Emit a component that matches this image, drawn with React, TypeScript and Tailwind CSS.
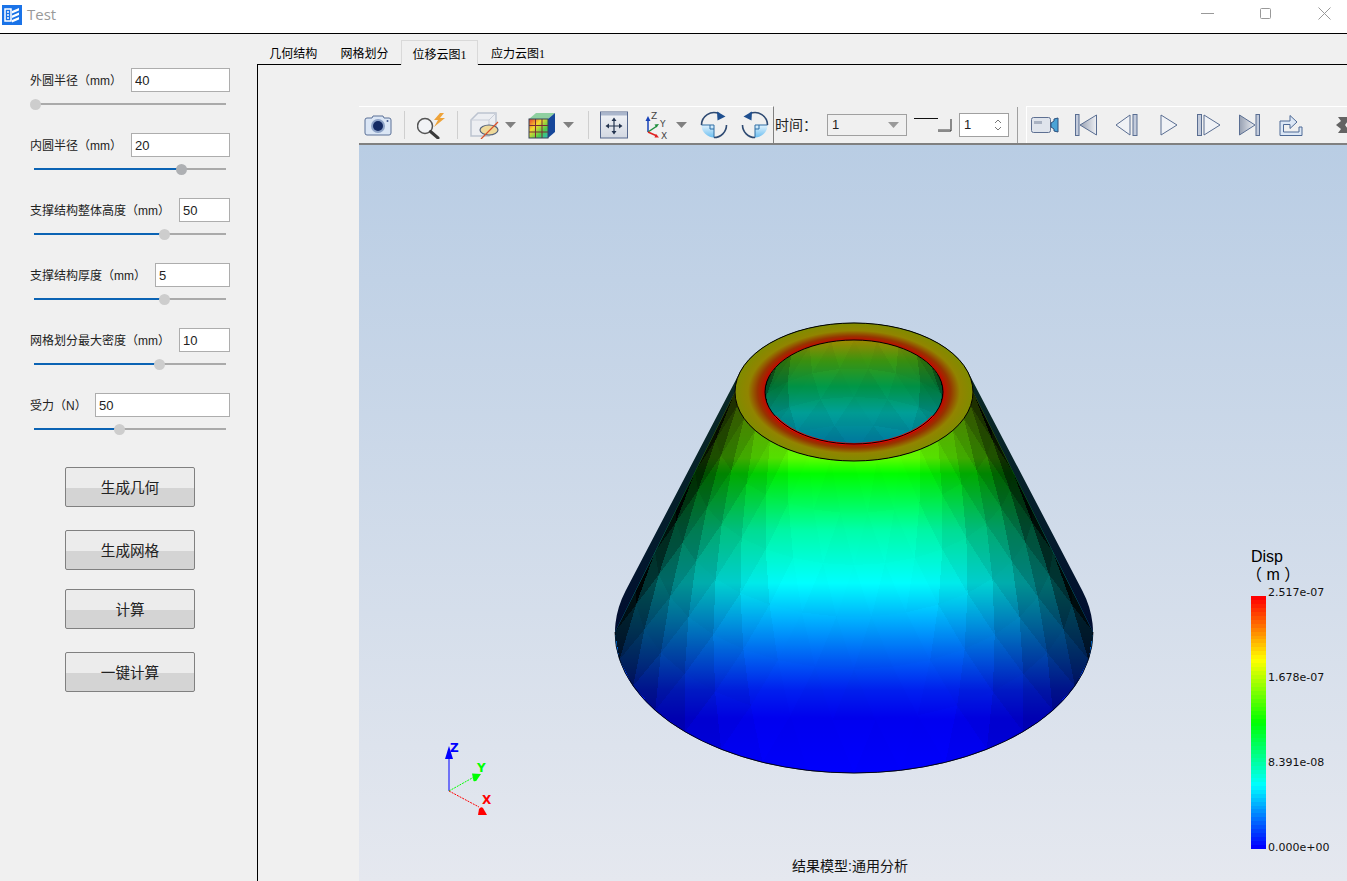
import React from 'react';

const cjk = { sans: "font-['Liberation_Sans','Noto_Sans_CJK_SC',sans-serif]" };

// left panel data
const params = [
  { label: '外圆半径（mm）', value: '40', inputW: 'w-[99px]', knob: 35, dark: false, fill: false },
  { label: '内圆半径（mm）', value: '20', inputW: 'w-[99px]', knob: 181, dark: true, fill: true },
  { label: '支撑结构整体高度（mm）', value: '50', inputW: 'w-[51px]', knob: 164, dark: false, fill: true },
  { label: '支撑结构厚度（mm）', value: '5', inputW: 'w-[75px]', knob: 164, dark: false, fill: true },
  { label: '网格划分最大密度（mm）', value: '10', inputW: 'w-[51px]', knob: 159, dark: false, fill: true },
  { label: '受力（N）', value: '50', inputW: 'w-[135px]', knob: 119, dark: false, fill: true },
];

const actions = [
  { label: '生成几何', mt: 'mt-0' },
  { label: '生成网格', mt: 'mt-[23px]' },
  { label: '计算', mt: 'mt-[19px]' },
  { label: '一键计算', mt: 'mt-[23px]' },
];

const ParamRow: React.FC<(typeof params)[number]> = ({ label, value, inputW, knob, dark, fill }) => {
  const left = knob - 34;
  return (
    <div className="h-[65px]">
      <div className="flex items-center justify-between h-6 pl-[30px] pr-[27px]">
        <span className="mt-[2px] text-xs text-[#222]">{label}</span>
        <input
          readOnly
          value={value}
          className={`${inputW} h-6 border border-[#adadad] bg-white px-[3px] text-[13px] text-[#222] outline-none`}
        />
      </div>
      <div className="relative ml-[34px] mt-[11px] w-[192px] h-[2px] bg-[#aaaaaa]">
        {fill && <div className="h-full bg-[#0b63b4]" style={{ width: left }} />}
        <div
          className={`absolute top-[-4.5px] w-[11px] h-[11px] rounded-full -ml-[5.5px] ${dark ? 'bg-[#aeb0b3]' : 'bg-[#cdcdcd]'}`}
          style={{ left }}
        />
      </div>
    </div>
  );
};

const TitleBar = () => (
  <div className="h-[34px] shrink-0 bg-white border-b border-black flex items-center">
    <svg width="20" height="20" viewBox="0 0 20 20" className="ml-[2px] -mt-[4px]">
      <rect width="20" height="20" fill="#1a73e8" />
      <path d="M3 4h6v12H3zM5 7h2M5 10h2M5 13h2" fill="none" stroke="#fff" strokeWidth="1.5" />
      <path d="M10 6l7-3v2.5l-7 3zM10 10.5l7-3V10l-7 3zM10 15l7-3v2.500l-7 3z" fill="#fff" />
    </svg>
    <span className="ml-[5px] -mt-[5px] text-[15px] text-[#999] font-['Open_Sans',sans-serif]">Test</span>
    <div className="ml-auto flex items-center -mt-[7px]">
      <svg width="13" height="13" viewBox="0 0 13 13" className="mr-[45px]">
        <path d="M0 6.500h13" stroke="#999" />
      </svg>
      <svg width="13" height="13" viewBox="0 0 13 13" className="mr-[46px]">
        <rect x="1.500" y="1.500" width="10" height="10" rx="1" fill="none" stroke="#999" />
      </svg>
      <svg width="13" height="13" viewBox="0 0 13 13" className="mr-[16px]">
        <path d="M.5.5l12 12M12.500.5l-12 12" stroke="#999" />
      </svg>
    </div>
  </div>
);

const SidePanel = () => (
  <div className="w-[257px] shrink-0 pt-[34px]">
    {params.map(p => (
      <ParamRow key={p.label} {...p} />
    ))}
    <div className="mt-[9px] ml-[65px] flex flex-col">
      {actions.map(a => (
        <button
          key={a.label}
          className={`${a.mt} w-[130px] h-10 pt-1 rounded-[2px] border border-[#808080] bg-[linear-gradient(#ececec_52%,#d4d4d4_52%)] text-[14.600px] text-[#222]`}
        >
          {a.label}
        </button>
      ))}
    </div>
  </div>
);

const Tabs = () => (
  <div className="h-[30px] shrink-0 flex items-end text-xs text-black font-['Liberation_Serif','Noto_Sans_CJK_SC',serif]">
    <div className="w-[71.500px] ml-[0.500px] h-6 pt-[3px] flex items-center justify-center">几何结构</div>
    <div className="w-[71px] h-6 pt-[3px] flex items-center justify-center">网格划分</div>
    <div className="relative -mb-px ml-px w-[77px] h-[25px] pt-[3px] border border-b-0 border-[#d9d9d9] bg-[#f0f0f0] flex items-center justify-center">
      位移云图1
    </div>
    <div className="ml-px w-[78px] h-6 pt-[3px] flex items-center justify-center">应力云图1</div>
  </div>
);

// toolbar icons
const Sep = ({ ml }: { ml: string }) => <div className={`${ml} w-px h-[28px] bg-[#cfcfcf] shrink-0`} />;

const Caret = ({ ml }: { ml: string }) => (
  <svg width="11" height="6" viewBox="0 0 11 6" className={`${ml} shrink-0`}>
    <path d="M0 0h11L5.500 6z" fill="#808080" />
  </svg>
);

const CameraIcon = () => (
  <svg width="28" height="24" viewBox="0 0 28 24" className="ml-[5px] shrink-0">
    <path d="M1 7a2 2 0 012-2h5l1-2h10l1 2h5a2 2 0 012 2v13a2 2 0 01-2 2H3a2 2 0 01-2-2z" fill="#dbe6f5" stroke="#5b7097" />
    <circle cx="14" cy="13" r="7" fill="#8ea3c7" />
    <circle cx="14" cy="13" r="5" fill="#142a63" />
    <circle cx="23.500" cy="8" r="1" fill="#41568a" />
  </svg>
);

const SearchBoltIcon = () => (
  <svg width="30" height="28" viewBox="0 0 30 28" className="ml-[12px] -mr-[2px] shrink-0">
    <circle cx="8" cy="15" r="7.500" fill="#f1f3f6" stroke="#555" strokeWidth="1.500" />
    <path d="M13.500 20.500L21 27" stroke="#3a3a3a" strokeWidth="3" strokeLinecap="round" />
    <path d="M23 2l-6 7h4l-4 7 11-9h-5l4-5z" fill="#eea33a" />
  </svg>
);

const HideCubeIcon = () => (
  <svg width="30" height="28" viewBox="0 0 30 28" className="ml-[12px] shrink-0">
    <path d="M1 9l7-7h18v15l-7 8H1z" fill="#eceef2" stroke="#bcc3cf" strokeWidth="1.500" />
    <path d="M1 9h18v16M19 9l7-7" fill="none" stroke="#c9ced8" />
    <ellipse cx="19" cy="19" rx="9" ry="5" fill="#eed99a" stroke="#55637c" strokeWidth="1.200" />
    <path d="M11 28L28 11" stroke="#d9502a" strokeWidth="1.200" />
  </svg>
);

const ResultCubeIcon = () => (
  <svg width="28" height="28" viewBox="0 0 28 28" className="ml-[12px] shrink-0">
    <defs>
      <linearGradient id="rbw" x1="0" y1="0" x2="1" y2="1">
        <stop offset="0" stopColor="#e8382c" />
        <stop offset=".35" stopColor="#f4d92e" />
        <stop offset=".7" stopColor="#4ecb4a" />
        <stop offset="1" stopColor="#29b8c9" />
      </linearGradient>
    </defs>
    <path d="M1 8l7-6h19L20 8z" fill="#8fd0a0" />
    <path d="M20 8l7-6v19l-7 6z" fill="#16479a" />
    <rect x="1" y="8" width="19" height="19" fill="url(#rbw)" />
    <path d="M1 14.500h19M1 21h19M7.500 8v19M14 8v19" stroke="#7a2a35" strokeWidth="1" />
    <rect x="1" y="8" width="19" height="19" fill="none" stroke="#39445a" />
  </svg>
);

const FitIcon = () => (
  <svg width="28" height="28" viewBox="0 0 28 28" className="ml-[11px] shrink-0">
    <defs>
      <linearGradient id="fitBg" x1="0" y1="0" x2="0" y2="1">
        <stop offset="0" stopColor="#f2f4f8" />
        <stop offset="1" stopColor="#d3d8e2" />
      </linearGradient>
    </defs>
    <rect x=".5" y="1" width="27" height="26" fill="url(#fitBg)" stroke="#56688e" />
    <rect x="1" y="1.500" width="26" height="3" fill="#aab6cc" />
    <path d="M14 8v14M7 15h14" stroke="#24344f" strokeWidth="1.200" />
    <path d="M14 6.500l-2.500 3.500h5zM14 23.500l-2.500-3.500h5zM5.500 15l3.500-2.500v5zM22.500 15L19 12.500v5z" fill="#24344f" />
  </svg>
);

const AxisIcon = () => (
  <svg width="28" height="30" viewBox="0 0 28 30" className="ml-[16px] shrink-0 font-['DejaVu_Sans',sans-serif]">
    <path d="M4 22V9" stroke="#1742b8" strokeWidth="1.500" />
    <path d="M4 6L1.500 11h5z" fill="#1742b8" />
    <path d="M4 22l9-6" stroke="#1e8f3c" strokeWidth="1.500" />
    <path d="M15 14l-4.500.5 2 3z" fill="#1e8f3c" />
    <path d="M4 22l9 4" stroke="#e02222" strokeWidth="1.500" />
    <path d="M15 27.500l-4.500 0 1.500-3.500z" fill="#e02222" />
    <text x="7" y="9" fontSize="9" fill="#444">Z</text>
    <text x="16" y="17" fontSize="9" fill="#444">Y</text>
    <text x="17" y="29" fontSize="9" fill="#444">X</text>
  </svg>
);

const RotateIcon = ({ flip }: { flip?: boolean }) => (
  <svg width="28" height="28" viewBox="0 0 28 28" className={`${flip ? '-scale-x-100' : ''} ml-[13px] shrink-0`}>
    <defs>
      <linearGradient id={flip ? 'rotB' : 'rotA'} x1="0" y1="0" x2="0" y2="1">
        <stop offset="0" stopColor="#e3f3fd" />
        <stop offset="1" stopColor="#6cbef0" />
      </linearGradient>
    </defs>
    <path d="M1.500 14H14v12.500A12.500 12.500 0 011.500 14z" fill={`url(#${flip ? 'rotB' : 'rotA'})`} />
    <path d="M1.500 14H14v12.500M10 14v4h4" fill="none" stroke="#2f6ea5" />
    <path d="M1.500 14A12.500 12.500 0 0119 2.600" fill="none" stroke="#2e4a72" strokeWidth="1.600" />
    <path d="M26.500 14A12.500 12.500 0 0114 26.500" fill="none" stroke="#2e4a72" strokeWidth="1.600" />
    <path d="M17 .5l8.500 5-8 4z" fill="#1f4f8f" />
  </svg>
);

const CamcorderIcon = () => (
  <svg width="28" height="18" viewBox="0 0 28 18" className="ml-[4px] shrink-0">
    <rect x=".5" y="1.500" width="19" height="15" rx="2" fill="#dfe4ec" stroke="#5e7092" />
    <rect x="3" y="5" width="8" height="3" fill="#a9b2c2" />
    <path d="M20 7l3-2V3l4-1v14l-4-1v-2l-3-2z" fill="#4aa3d6" stroke="#2d4f7c" />
  </svg>
);

// transport buttons, all the same gray-blue treatment
const tri = 'url(#tp)';
const TransportDefs = () => (
  <svg width="0" height="0" className="absolute">
    <defs>
      <linearGradient id="tp" x1="0" y1="0" x2="1" y2="0">
        <stop offset="0" stopColor="#97a0b2" />
        <stop offset="1" stopColor="#eef0f4" />
      </linearGradient>
    </defs>
  </svg>
);

const FirstIcon = () => (
  <svg width="22" height="22" viewBox="0 0 22 22" className="ml-[16px] shrink-0">
    <rect x=".5" y=".5" width="3.500" height="21" fill="#c3cbdb" stroke="#5a6e92" />
    <path d="M21.500 1v20L5 11z" fill={tri} stroke="#5a6e92" />
  </svg>
);
const PrevIcon = () => (
  <svg width="23" height="22" viewBox="0 0 23 22" className="ml-[18px] shrink-0">
    <path d="M15 1v20L1 11z" fill="#f0f2f6" stroke="#5a6e92" />
    <rect x="18" y=".5" width="4" height="21" fill="#c3cbdb" stroke="#5a6e92" />
  </svg>
);
const PlayIcon = () => (
  <svg width="18" height="22" viewBox="0 0 18 22" className="ml-[22px] shrink-0">
    <path d="M1 1v20l16-10z" fill="#f0f2f6" stroke="#5a6e92" />
  </svg>
);
const NextIcon = () => (
  <svg width="24" height="22" viewBox="0 0 24 22" className="ml-[19px] shrink-0">
    <rect x=".5" y=".5" width="4" height="21" fill="#c3cbdb" stroke="#5a6e92" />
    <path d="M7 1v20l16-10z" fill="#f0f2f6" stroke="#5a6e92" />
  </svg>
);
const LastIcon = () => (
  <svg width="21" height="22" viewBox="0 0 21 22" className="ml-[18px] shrink-0">
    <path d="M.5 1v20L16 11z" fill={tri} stroke="#5a6e92" />
    <rect x="17" y=".5" width="3.500" height="21" fill="#c3cbdb" stroke="#5a6e92" />
  </svg>
);
const ExportIcon = () => (
  <svg width="24" height="22" viewBox="0 0 24 22" className="ml-[19px] shrink-0">
    <path d="M1 21.500V7h10V1.500l7 6.500-7 6.500v-4H4.500V18H20v-5h3v8.500z" fill="#dce7f5" stroke="#4e6a96" />
  </svg>
);
const FullIcon = () => (
  <svg width="22" height="16" viewBox="0 0 22 16" className="ml-[33px] shrink-0">
    <path d="M2 0h10v4L9 8l3 4v4H2l3-4-5-4 5-4z" fill="#4a4a4a" opacity=".85" />
  </svg>
);

const Toolbar = () => (
  <div className="h-[38px] shrink-0 flex bg-[#f0f0f0] border-b-2 border-[#808080] text-[#222]">
    <div className="w-[415px] shrink-0 flex items-center border-r border-[#808080] border-t border-t-white -mt-px">
      <CameraIcon />
      <Sep ml="ml-[12px]" />
      <SearchBoltIcon />
      <Sep ml="ml-[12px]" />
      <HideCubeIcon />
      <Caret ml="ml-[5px]" />
      <ResultCubeIcon />
      <Caret ml="ml-[7px]" />
      <Sep ml="ml-[14px]" />
      <FitIcon />
      <AxisIcon />
      <Caret ml="ml-[4px]" />
      <RotateIcon />
      <RotateIcon flip />
    </div>
    <div className="w-[244px] shrink-0 flex items-center border-r border-[#a0a0a0]">
      <span className="ml-px w-[52px] text-sm">时间：</span>
      <div className="w-[80px] h-[22px] border border-[#a0a0a0] flex items-center pl-1 text-[13px]">
        1
        <svg width="11" height="6" viewBox="0 0 11 6" className="ml-auto mr-[7px]">
          <path d="M0 0h11L5.500 6z" fill="#9a9a9a" />
        </svg>
      </div>
      <svg width="38" height="14" viewBox="0 0 38 14" className="ml-[7px]">
        <path d="M0 .5h24" stroke="#111" />
        <path d="M24 13h13V1" fill="none" stroke="#222" />
        <path d="M24 11.500h12" stroke="#999" />
      </svg>
      <div className="ml-[7px] w-[50px] h-6 border border-[#a0a0a0] bg-white flex items-center pl-1 text-[13px]">
        1
        <svg width="8" height="12" viewBox="0 0 8 12" className="ml-auto mr-[6px]">
          <path d="M1 4l3-3 3 3M1 8l3 3 3-3" fill="none" stroke="#777" />
        </svg>
      </div>
    </div>
    <div className="ml-2 flex-1 flex items-center border-l border-t border-white -mt-px overflow-hidden">
      <CamcorderIcon />
      <FirstIcon />
      <PrevIcon />
      <PlayIcon />
      <NextIcon />
      <LastIcon />
      <ExportIcon />
      <FullIcon />
    </div>
  </div>
);

// cone mesh, coordinates in page pixels
const lerp = (a: number, b: number, t: number) => a + (b - a) * t;

type Ring = { cy: number; rx: number; ry: number };

function buildFacets(top: Ring, bottom: Ring, rings: number, segs: number, front: boolean, contrast: number) {
  const out: { pts: string; o: number }[] = [];
  const pt = (k: number, i: number) => {
    const t = k / rings;
    const phi = ((i + (k % 2) * 0.5) / segs) * Math.PI * 2;
    return {
      x: 854 + lerp(top.rx, bottom.rx, t) * Math.cos(phi),
      y: lerp(top.cy, bottom.cy, t) + lerp(top.ry, bottom.ry, t) * Math.sin(phi),
      phi,
    };
  };
  for (let k = 0; k < rings; k++) {
    for (let i = 0; i < segs; i++) {
      const j = k % 2;
      const a = pt(k, i);
      const b = pt(k, i + 1);
      const c = pt(k + 1, i + j);
      const d = pt(k + 1, i + j + 1);
      const tris = [
        { ps: [a, b, c], up: 0 },
        { ps: [b, d, c], up: 1 },
      ];
      tris.forEach(({ ps, up }) => {
        const m = (ps[0].phi + ps[1].phi + ps[2].phi) / 3;
        const s = front ? Math.sin(m) : -Math.sin(m);
        if (s < -0.2) return; // far side, hidden
        const lit = Math.min(1, Math.pow(Math.max(s, 0), 0.85) + 0.08);
        const jitter = (((k * 7 + i * 13) % 5) / 5) * contrast + up * contrast;
        out.push({
          pts: ps.map(p => `${p.x.toFixed(1)},${p.y.toFixed(1)}`).join(' '),
          o: Math.min(1, Math.max(0, 1 - lit + jitter * (1 - lit * 0.8))),
        });
      });
    }
  }
  return out;
}

const outerFacets = buildFacets({ cy: 392, rx: 119, ry: 69 }, { cy: 632, rx: 239, ry: 141 }, 6, 32, true, 0.04);
const innerFacets = buildFacets({ cy: 392, rx: 89, ry: 52 }, { cy: 632, rx: 209, ry: 122 }, 6, 24, false, 0.14);

const ConeModel = () => (
  <svg viewBox="359 145 988 736" className="absolute inset-0 w-full h-full font-['DejaVu_Sans',sans-serif]">
    <defs>
      <linearGradient id="coneFill" gradientUnits="userSpaceOnUse" x1="0" y1="323" x2="0" y2="773">
        <stop offset="0" stopColor="#c8a000" />
        <stop offset=".3" stopColor="#60ff00" />
        <stop offset=".335" stopColor="#00ff00" />
        <stop offset=".46" stopColor="#00ffaa" />
        <stop offset=".578" stopColor="#00ffff" />
        <stop offset=".66" stopColor="#00b0ff" />
        <stop offset=".727" stopColor="#0070f8" />
        <stop offset=".816" stopColor="#0020f0" />
        <stop offset=".88" stopColor="#0000f0" />
        <stop offset="1" stopColor="#0000ff" />
      </linearGradient>
      <linearGradient id="coneEdge" gradientUnits="userSpaceOnUse" x1="0" y1="370" x2="0" y2="640">
        <stop offset="0" stopColor="#0a2a24" />
        <stop offset=".6" stopColor="#041c2c" />
        <stop offset="1" stopColor="#000a30" />
      </linearGradient>
      <linearGradient id="holeFill" gradientUnits="userSpaceOnUse" x1="0" y1="340" x2="0" y2="444">
        <stop offset="0" stopColor="#a08a00" />
        <stop offset=".2" stopColor="#3f9a10" />
        <stop offset=".45" stopColor="#009a4a" />
        <stop offset=".7" stopColor="#00a098" />
        <stop offset="1" stopColor="#0078a0" />
      </linearGradient>
      <radialGradient id="ringFill" cx=".5" cy=".5" r=".5">
        <stop offset=".74" stopColor="#c80000" />
        <stop offset=".81" stopColor="#963400" />
        <stop offset=".89" stopColor="#918400" />
        <stop offset="1" stopColor="#7f8c00" />
      </radialGradient>
      <clipPath id="frontClip">
        <path d="M735 392L615 632A239 141 0 001093 632L973 392A119 69 0 01735 392z" />
      </clipPath>
      <clipPath id="holeClip">
        <ellipse cx="854" cy="392" rx="89" ry="52" />
      </clipPath>
    </defs>

    <path d="M740 372L625.500 591A239 141 0 101082.500 591L968 372A119 69 0 00740 372z" fill="url(#coneEdge)" />
    <g clipPath="url(#frontClip)">
      <rect x="600" y="320" width="510" height="460" fill="url(#coneFill)" />
      <g shapeRendering="crispEdges">
        {outerFacets.map((f, i) => (
          <polygon key={i} points={f.pts} fill="#000" opacity={f.o} />
        ))}
      </g>
    </g>
    <path d="M615 632A239 141 0 001093 632" fill="none" stroke="#000" strokeWidth=".8" />

    <ellipse cx="854" cy="392" rx="119" ry="69" fill="url(#ringFill)" stroke="#000" />
    <g clipPath="url(#holeClip)">
      <rect x="760" y="335" width="190" height="115" fill="url(#holeFill)" />
      <g shapeRendering="crispEdges">
        {innerFacets.map((f, i) => (
          <polygon key={i} points={f.pts} fill="#000" opacity={f.o} />
        ))}
      </g>
    </g>
    <path d="M775 416A89 52 0 00933 416" fill="none" stroke="#ff0000" strokeWidth="2" />
    <ellipse cx="854" cy="392" rx="89" ry="52" fill="none" stroke="#000" />

    {/* orientation triad */}
    <path d="M449 791V755" stroke="#0000ff" />
    <path d="M449 746l-4 13h8z" fill="#0000ff" />
    <path d="M449 791l25-14" stroke="#00ff00" strokeDasharray="2 1" />
    <path d="M481 774l-9-.5 1.500 7.500q3 1 4-2z" fill="#00ff00" />
    <path d="M449 791l30 16" stroke="#ff0000" strokeDasharray="2 1" />
    <path d="M487 815l-9 0 1-6q2-3 4-1z" fill="#ff0000" />
    <text x="450" y="752" fontSize="12" fontWeight="700" fill="#0000ff">Z</text>
    <text x="477" y="772" fontSize="12" fontWeight="700" fill="#00ff00">Y</text>
    <text x="482" y="804" fontSize="12" fontWeight="700" fill="#ff0000">X</text>
  </svg>
);

// bottom (0) to top (1): blue, cyan, green, yellow, red
function jet(t: number) {
  const stops = [
    [0, 0, 255],
    [0, 255, 255],
    [0, 255, 0],
    [255, 255, 0],
    [255, 0, 0],
  ];
  const p = Math.min(3.999, t * 4);
  const i = Math.floor(p);
  const c = stops[i].map((v, n) => Math.round(lerp(v, stops[i + 1][n], p - i)));
  return `rgb(${c[0]},${c[1]},${c[2]})`;
}

const bands = Array.from({ length: 64 }, (_, i) => jet(1 - i / 63));
const ticks = ['2.517e-07', '1.678e-07', '8.391e-08', '0.000e+00'];

const Legend = () => (
  <div className="absolute left-[892px] top-[403px] text-black">
    <div className="text-base leading-[18px]">Disp</div>
    <div className="text-base leading-[18px] -ml-[5px] whitespace-pre">（ m ）</div>
    <div className="flex mt-[12px] h-[253px]">
      <div className="w-[15px] flex flex-col">
        {bands.map((c, i) => (
          <div key={i} className="flex-1" style={{ background: c }} />
        ))}
      </div>
      <div className="ml-[2px] -mt-[12px] h-[273px] flex flex-col justify-between text-[11px] leading-[18px] text-[#111] font-['DejaVu_Sans',sans-serif]">
        {ticks.map(t => (
          <div key={t}>{t}</div>
        ))}
      </div>
    </div>
  </div>
);

const Viewer = () => (
  <div className="relative flex-1 overflow-hidden bg-[linear-gradient(#b9cde4,#e5e8ef)]">
    <ConeModel />
    <Legend />
    <div className="absolute left-[433px] top-[711px] text-sm text-[#111]">结果模型:通用分析</div>
  </div>
);

export default function App() {
  return (
    <div className={`w-[1347px] h-[881px] overflow-hidden flex flex-col bg-[#f0f0f0] ${cjk.sans}`}>
      <TransportDefs />
      <TitleBar />
      <div className="flex-1 flex min-h-0">
        <SidePanel />
        <div className="flex-1 flex flex-col min-w-0">
          <Tabs />
          <div className="flex-1 min-h-0 border-l border-t border-black pl-[101px] pt-[42px] flex flex-col">
            <Toolbar />
            <Viewer />
          </div>
        </div>
      </div>
    </div>
  );
}
